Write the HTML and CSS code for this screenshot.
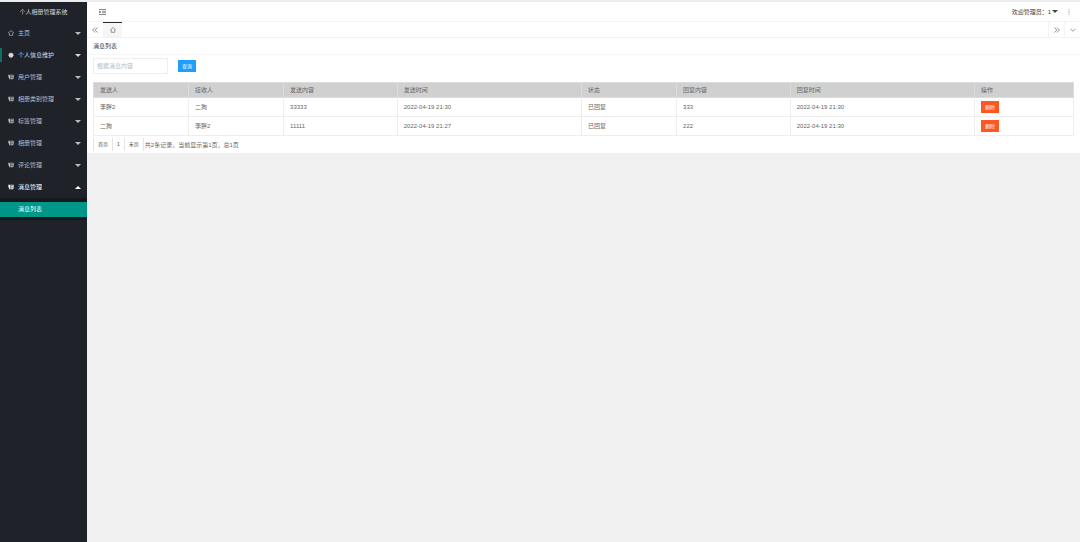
FILE: index.html
```html
<!DOCTYPE html>
<html lang="zh-CN">
<head>
<meta charset="UTF-8">
<meta name="viewport" content="width=device-width, initial-scale=1.0">
<title>个人相册管理系统</title>
<link rel="stylesheet" href="styles.css">
</head>
<body>

<!-- 公用图标 -->
<svg class="icon-defs" aria-hidden="true">
    <symbol id="icon-home" viewBox="0 0 14 14"><path d="M7 1.500 1 6l2 1v5.500h8V7l2-1z" fill="none" stroke="currentColor" stroke-width="1.500"/></symbol>
    <symbol id="icon-user" viewBox="0 0 16 16"><path d="M8 1l2.500 2.500 3.500.5v3l2 1.500-3 2V13l-5 2-5-2v-2.500l-3-2L2 7V4l3.500-.5z" fill="currentColor"/></symbol>
    <symbol id="icon-list" viewBox="0 0 16 16"><path d="M1 2h5v12H3V9H1zM7 2h8v2H7zM7 6h6v2H7zM7 9h6v2H7zM7 12h7v2H7zM13 4h2v8h-2z" fill="currentColor"/></symbol>
</svg>

<div class="layout">
    <aside class="side">
        <div class="logo">个人相册管理系统</div>
        <nav class="menu">
            <a href="#" class="menu-item"><svg class="icon"><use href="#icon-home"/></svg><span>主页</span><i class="arrow"></i></a>
            <a href="#" class="menu-item hover"><svg class="icon"><use href="#icon-user"/></svg><span>个人信息维护</span><i class="arrow"></i></a>
            <a href="#" class="menu-item"><svg class="icon"><use href="#icon-list"/></svg><span>用户管理</span><i class="arrow"></i></a>
            <a href="#" class="menu-item"><svg class="icon"><use href="#icon-list"/></svg><span>相册类别管理</span><i class="arrow"></i></a>
            <a href="#" class="menu-item"><svg class="icon"><use href="#icon-list"/></svg><span>标签管理</span><i class="arrow"></i></a>
            <a href="#" class="menu-item"><svg class="icon"><use href="#icon-list"/></svg><span>相册管理</span><i class="arrow"></i></a>
            <a href="#" class="menu-item"><svg class="icon"><use href="#icon-list"/></svg><span>评论管理</span><i class="arrow"></i></a>
            <a href="#" class="menu-item open"><svg class="icon"><use href="#icon-list"/></svg><span>消息管理</span><i class="arrow up"></i></a>
            <div class="submenu">
                <a href="#" class="active">消息列表</a>
            </div>
        </nav>
    </aside>

    <div class="main">
        <header class="header">
            <button class="icon-button" aria-label="侧边伸缩">
                <svg class="icon-fold" viewBox="0 0 14 12"><path d="M0 1h14M6 4.500h8M6 7.500h8M0 11h14M0 4v4l4-2z" fill="none" stroke="currentColor" stroke-width="1.500"/></svg>
            </button>
            <div class="header-right">
                <a href="#" class="admin">欢迎管理员：1<i class="arrow"></i></a>
                <button class="icon-button" aria-label="更多">
                    <svg class="icon-more" viewBox="0 0 4 14"><path d="M1 1h2v2H1zM1 6h2v2H1zM1 11h2v2H1z" fill="currentColor"/></svg>
                </button>
            </div>
        </header>

        <div class="tabs">
            <button class="tab-control" aria-label="向左"><svg viewBox="0 0 14 14"><path d="M7 1 1.500 7 7 13M13 1 7.500 7l5.500 6"/></svg></button>
            <a href="#" class="tab" aria-label="主页"><svg viewBox="0 0 14 14"><path d="M7 1.500 1 6l2 1v5.500h8V7l2-1z"/></svg></a>
            <button class="tab-control right" aria-label="向右"><svg viewBox="0 0 14 14"><path d="m1 1 5.500 6L1 13M7 1l5.500 6L7 13"/></svg></button>
            <button class="tab-control bordered" aria-label="标签操作"><svg viewBox="0 0 14 14"><path d="m1 4 6 6 6-6"/></svg></button>
        </div>

        <main class="card">
            <h1 class="card-title">消息列表</h1>
            <div class="card-body">
                <form class="search">
                    <input type="text" placeholder="根据消息内容" aria-label="消息内容">
                    <button type="button" class="btn">查询</button>
                </form>

                <table class="table">
                    <colgroup>
                        <col class="col-name">
                        <col class="col-name">
                        <col class="col-content">
                        <col class="col-time">
                        <col class="col-name">
                        <col class="col-content">
                        <col class="col-time">
                        <col>
                    </colgroup>
                    <thead>
                        <tr>
                            <th>发送人</th>
                            <th>接收人</th>
                            <th>发送内容</th>
                            <th>发送时间</th>
                            <th>状态</th>
                            <th>回复内容</th>
                            <th>回复时间</th>
                            <th>操作</th>
                        </tr>
                    </thead>
                    <tbody>
                        <tr>
                            <td>李胖2</td>
                            <td>二狗</td>
                            <td>33333</td>
                            <td>2022-04-19 21:30</td>
                            <td>已回复</td>
                            <td>333</td>
                            <td>2022-04-19 21:30</td>
                            <td><button class="btn btn-danger">删除</button></td>
                        </tr>
                        <tr>
                            <td>二狗</td>
                            <td>李胖2</td>
                            <td>11111</td>
                            <td>2022-04-19 21:27</td>
                            <td>已回复</td>
                            <td>222</td>
                            <td>2022-04-19 21:30</td>
                            <td><button class="btn btn-danger">删除</button></td>
                        </tr>
                    </tbody>
                </table>

                <div class="pager">
                    <a href="#">首页</a>
                    <a href="#">1</a>
                    <a href="#">末页</a>
                    <span>共2条记录，当前显示第1页，总1页</span>
                </div>
            </div>
        </main>
    </div>
</div>

</body>
</html>
```

FILE: styles.css
```css
* {
    box-sizing: border-box;
}

body {
    margin: 0;
    font-family: "Liberation Sans", "Noto Sans CJK SC", sans-serif;
    font-size: 6px;
    line-height: 8px;
    color: #666;
    background-color: #f0f0f0;
}

a {
    color: inherit;
    text-decoration: none;
}

button {
    padding: 0;
    border: 0;
    background: none;
    color: inherit;
    font: inherit;
    cursor: pointer;
}

.icon-defs {
    display: none;
}

.layout {
    display: flex;
    min-height: 100vh;
    border-top: 2px solid #ececec;
}

/* 左侧菜单 */
.side {
    flex: none;
    width: 87px;
    background-color: #20222a;
    color: #bcbdc0;
}

.logo {
    height: 20px;
    line-height: 20px;
    text-align: center;
    color: #d5d6d8;
}

.menu-item {
    display: flex;
    align-items: center;
    height: 22px;
    padding: 0 6px 0 8px;
}

.menu-item.hover {
    background: linear-gradient(#0c6f69, #0c6f69) left center / 2px 14px no-repeat;
    color: #d8d8da;
}

.menu-item.open {
    color: #fff;
}

.icon {
    width: 6px;
    height: 6px;
    margin-right: 4px;
}

.arrow {
    width: 0;
    height: 0;
    border: 3px solid transparent;
    border-top-color: currentColor;
    border-bottom: 0;
}

.menu-item .arrow {
    margin-left: auto;
}

.arrow.up {
    border-top: 0;
    border-bottom: 3px solid currentColor;
}

.submenu {
    padding: 4px 0 3px;
    background-color: #16181d;
}

.submenu a {
    display: block;
    height: 15px;
    padding-left: 18px;
    line-height: 15px;
}

.submenu .active {
    background-color: #009688;
    color: #fff;
}

/* 顶部 */
.main {
    flex: 1;
    min-width: 0;
}

.header {
    display: flex;
    align-items: center;
    justify-content: space-between;
    height: 20px;
    padding: 0 9px 0 12px;
    border-bottom: 1px solid #f4f4f4;
    background-color: #fff;
}

.icon-button {
    display: flex;
    color: #666;
}

.icon-fold {
    width: 7px;
    height: 6px;
}

.icon-more {
    width: 4px;
    height: 6px;
}

.header-right {
    display: flex;
    align-items: center;
    gap: 9px;
}

.admin {
    display: flex;
    align-items: center;
    gap: 1px;
    color: #444;
}

.tabs {
    display: flex;
    height: 16px;
    border-bottom: 1px solid #f2f2f2;
    background-color: #fff;
}

.tabs svg {
    width: 6px;
    height: 6px;
    fill: none;
    stroke: #888;
    stroke-width: 2;
}

.tab-control,
.tab {
    display: flex;
    align-items: center;
    justify-content: center;
    width: 16px;
}

.tab {
    width: 19px;
    border-top: 1px solid #292b34;
    background-color: #f6f6f6;
}

.right {
    margin-left: auto;
}

.right,
.bordered {
    border-left: 1px solid #f4f4f4;
}

/* 内容 */
.card {
    background-color: #fff;
}

.card-title {
    height: 17px;
    margin: 0;
    padding: 0 6px;
    border-bottom: 1px solid #f6f6f6;
    font-size: 6px;
    font-weight: normal;
    line-height: 16px;
    color: #333;
}

.card-body {
    padding: 3px 6px 2px;
}

.search {
    display: flex;
    align-items: center;
    gap: 10px;
    margin-bottom: 8px;
}

.search input {
    width: 75px;
    height: 16px;
    padding: 0 3px;
    border: 1px solid #eee;
    font: inherit;
    color: #666;
}

.search input::placeholder {
    color: #bbb;
}

.btn {
    display: block;
    width: 18px;
    height: 12px;
    background-color: #1e9fff;
    color: #fff;
    font-size: 5px;
    line-height: 12px;
}

.btn-danger {
    background-color: #ff5722;
}

.table {
    width: 100%;
    border-collapse: collapse;
    table-layout: fixed;
}

.col-name {
    width: 9.7%;
}

.col-content {
    width: 11.6%;
}

.col-time {
    width: 18.8%;
}

.table th,
.table td {
    padding: 3px 6px;
    border: 1px solid #eee;
    font-weight: normal;
    text-align: left;
}

.table th {
    padding: 3px 6px;
    border-color: #dcdcdc;
    background-color: #d0d0d0;
}

.table td {
    height: 19px;
}

.pager {
    display: flex;
    align-items: center;
    margin-top: 2px;
}

.pager a {
    height: 13px;
    padding: 0 4px;
    border: solid #e4e4e4;
    border-width: 0 1px;
    font-size: 5px;
    line-height: 13px;
    color: #555;
}

.pager a + a {
    border-left-width: 0;
}

.pager span {
    margin-left: 1px;
}
```
